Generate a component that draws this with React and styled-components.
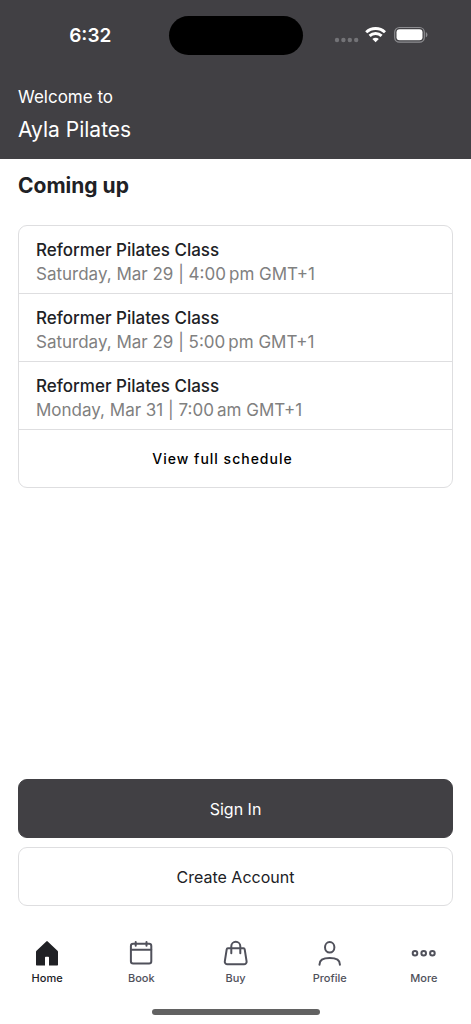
import React, { useState } from "react";
import styled, { createGlobalStyle } from "styled-components";

const classes = [
    { id: 1, name: 'Reformer Pilates Class', time: 'Saturday, Mar 29 | 4:00\u202fpm GMT+1' },
    { id: 2, name: 'Reformer Pilates Class', time: 'Saturday, Mar 29 | 5:00\u202fpm GMT+1' },
    { id: 3, name: 'Reformer Pilates Class', time: 'Monday, Mar 31 | 7:00\u202fam GMT+1' },
]

const HomeIcon = () => (
    <TabSvg viewBox="0 0 26 26">
        <path d="M12.3 1.4a1 1 0 0 1 1.4 0l9.8 9.4c.3.3.5.7.5 1.1v12.800a.7.7 0 0 1-.7.7H15v-7.900a.8.8 0 0 0-.8-.8h-2.400a.8.8 0 0 0-.8.8v7.900H2.700a.7.7 0 0 1-.7-.7V11.900c0-.4.2-.8.5-1.1z" fill="currentColor" />
    </TabSvg>
)

const BookIcon = () => (
    <TabSvg viewBox="0 0 26 26">
        <rect x="2.900" y="3.800" width="20.400" height="19.700" rx="2.200" />
        <path d="M3 9.800h20.200M7.700 1.900v3.900M18.500 1.900v3.900" />
    </TabSvg>
)

const BuyIcon = () => (
    <TabSvg viewBox="0 0 26 26">
        <path d="M4.900 8.300h15.600a1.200 1.200 0 0 1 1.200 1l1.900 12a2.600 2.600 0 0 1-2.600 3H4.400a2.600 2.600 0 0 1-2.600-3l1.900-12a1.200 1.200 0 0 1 1.200-1z" />
        <path d="M8.300 13.300V6.300a4.500 4.500 0 0 1 9 0v7" />
    </TabSvg>
)

const ProfileIcon = () => (
    <TabSvg viewBox="0 0 26 26">
        <ellipse cx="12.700" cy="7.300" rx="4.700" ry="5.300" />
        <path d="M2.500 24.800v-.4c0-3.900 3.900-6.300 10.200-6.300s10.200 2.400 10.200 6.300v.4" />
    </TabSvg>
)

const MoreIcon = () => (
    <TabSvg viewBox="0 0 26 26">
        <circle cx="4" cy="13.300" r="2.300" />
        <circle cx="12.700" cy="13.300" r="2.300" />
        <circle cx="21.400" cy="13.300" r="2.300" />
    </TabSvg>
)

const tabs = [
    { name: 'Home', Icon: HomeIcon },
    { name: 'Book', Icon: BookIcon },
    { name: 'Buy', Icon: BuyIcon },
    { name: 'Profile', Icon: ProfileIcon },
    { name: 'More', Icon: MoreIcon },
]

const StatusIcons = () => (
    <svg width="96" height="18" viewBox="0 0 96 18" aria-hidden="true">
        <g fill="#737377">
            <circle cx="4" cy="14" r="2.200" />
            <circle cx="10.400" cy="14" r="2.200" />
            <circle cx="16.800" cy="14" r="2.200" />
            <circle cx="23.200" cy="14" r="2.200" />
        </g>
        <g fill="none" stroke="#fff" strokeWidth="2.900">
            <path d="M33.200 6.200a13.600 13.600 0 0 1 18.800 0" />
            <path d="M36.600 9.900a8.700 8.700 0 0 1 12 0" />
        </g>
        <path d="M42.600 16.200l-3.200-3.200a4.600 4.600 0 0 1 6.400 0z" fill="#fff" />
        <rect x="61.700" y="1.500" width="29.600" height="14.600" rx="4.700" fill="none" stroke="#8d8d91" strokeWidth="1.200" />
        <rect x="63.500" y="3.300" width="26" height="11" rx="3" fill="#fff" />
        <path d="M92.800 6.300c2.200.6 2.200 4.400 0 5z" fill="#8d8d91" />
    </svg>
)

const App = () => {
    const [active, setActive] = useState('Home');

    return (
        <>
            <GlobalStyle />
            <Screen>
                <Header>
                    <StatusBar>
                        <Clock>6:32</Clock>
                        <Island />
                        <StatusRight><StatusIcons /></StatusRight>
                    </StatusBar>
                    <Welcome>Welcome to</Welcome>
                    <Studio>Ayla Pilates</Studio>
                </Header>
                <Main>
                    <Title>Coming up</Title>
                    <Card>
                        <ClassList>
                            {classes.map((el) => (
                                <ClassItem key={el.id}>
                                    <ClassName>{el.name}</ClassName>
                                    <ClassTime>{el.time}</ClassTime>
                                </ClassItem>
                            ))}
                        </ClassList>
                        <ScheduleButton type="button">View full schedule</ScheduleButton>
                    </Card>
                    <Actions>
                        <ActionButton type="button" $primary>Sign In</ActionButton>
                        <ActionButton type="button">Create Account</ActionButton>
                    </Actions>
                </Main>
                <TabBar>
                    {tabs.map(({ name, Icon }) => (
                        <Tab
                            key={name}
                            type="button"
                            $active={active === name}
                            onClick={() => setActive(name)}
                        >
                            <Icon />
                            {name}
                        </Tab>
                    ))}
                </TabBar>
                <HomeIndicator />
            </Screen>
        </>
    )
}

export default App;

const GlobalStyle = createGlobalStyle`
    * {
        box-sizing: border-box;
    }
    body {
        margin: 0;
        background-color: #fff;
        color: #202125;
        font-family: Inter, "Liberation Sans", sans-serif;
    }
    button {
        font-family: inherit;
        cursor: pointer;
    }
`
const Screen = styled.div`
    display: flex;
    flex-direction: column;
    min-height: 100vh;
`
const Header = styled.header`
    padding: 0 18px 14px;
    background-color: #414044;
    color: #fff;
`
const StatusBar = styled.div`
    display: grid;
    grid-template-columns: 1fr 134px 1fr;
    align-items: center;
    height: 70px;
    margin-bottom: 14px;
`
const Clock = styled.span`
    padding-right: 6px;
    font-size: 19px;
    font-weight: 600;
    text-align: center;
`
const Island = styled.div`
    height: 39px;
    border-radius: 20px;
    background-color: #000;
`
const StatusRight = styled.div`
    display: flex;
    justify-content: center;
    padding-left: 6px;
`
const Welcome = styled.p`
    margin: 0;
    font-size: 17px;
    line-height: 26px;
`
const Studio = styled.h1`
    margin: 5px 0 0;
    font-size: 21px;
    font-weight: 400;
    line-height: 30px;
`
const Main = styled.main`
    display: flex;
    flex: 1;
    flex-direction: column;
    padding: 12px 18px 0;
`
const Title = styled.h2`
    margin: 0 0 24px;
    font-size: 21px;
    font-weight: 700;
    line-height: 30px;
`
const Card = styled.section`
    border: 1px solid #dedee0;
    border-radius: 9px;
`
const ClassList = styled.ul`
    margin: 0;
    padding: 0;
    list-style: none;
`
const ClassItem = styled.li`
    padding: 12px 17px 7px;
    border-bottom: 1px solid #dedee0;
    line-height: 24px;
`
const ClassName = styled.div`
    font-size: 17px;
    font-weight: 500;
`
const ClassTime = styled.div`
    color: #808080;
    font-size: 17px;
`
const ScheduleButton = styled.button`
    width: 100%;
    height: 57px;
    padding: 0 26px 0 0;
    border: 0;
    background: none;
    color: #000;
    font-size: 14px;
    font-weight: 500;
    letter-spacing: 1px;
`
const Actions = styled.div`
    display: flex;
    flex-direction: column;
    gap: 9px;
    margin-top: auto;
    padding-top: 24px;
`
const ActionButton = styled.button`
    height: 59px;
    border: 1px solid ${props => props.$primary ? '#414044' : '#dedee0'};
    border-radius: 9px;
    background-color: ${props => props.$primary ? '#414044' : '#fff'};
    color: ${props => props.$primary ? '#fff' : '#202125'};
    font-size: 16px;
`
const TabBar = styled.nav`
    display: flex;
    margin-top: 34px;
`
const Tab = styled.button`
    display: flex;
    flex: 1;
    flex-direction: column;
    align-items: center;
    gap: 4px;
    padding: 0;
    border: 0;
    background: none;
    color: ${props => props.$active ? '#202125' : '#50515b'};
    font-size: 11px;
    font-weight: 500;
    line-height: 16px;
`
const TabSvg = styled.svg`
    width: 26px;
    height: 26px;
    fill: none;
    stroke: currentColor;
    stroke-width: 2;
    stroke-linecap: round;

    path[fill] {
        stroke: none;
    }
`
const HomeIndicator = styled.div`
    align-self: center;
    width: 168px;
    height: 6px;
    margin: 23px 0 9px;
    border-radius: 3px;
    background-color: #626262;
`
